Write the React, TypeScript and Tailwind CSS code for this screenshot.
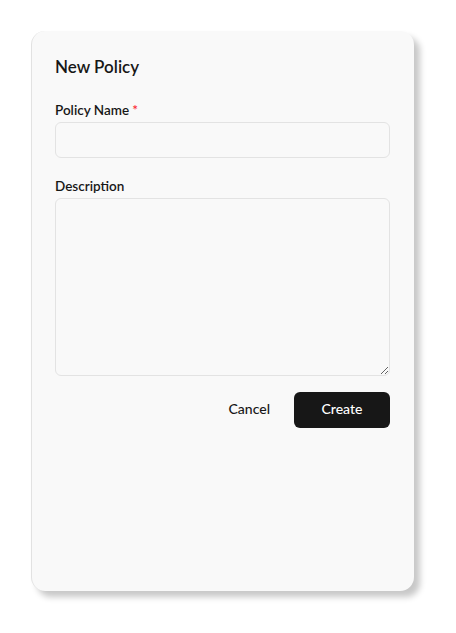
export default function App() {
  return (
    <div className="min-h-screen bg-white pt-[31px] pl-[31px]">
      <div
        className="w-[383px] h-[560px] rounded-[14px] bg-[#f9f9f9] border-l border-[#e2e2e2] shadow-[6px_6px_6px_rgba(0,0,0,0.22)] pl-[23px] pr-6 pt-[24px] text-[#171717]"
        style={{ fontFamily: 'Lato, "Noto Sans", sans-serif' }}
      >
        <h2 className="text-[17px] leading-[24px] font-semibold mb-[22px]">New Policy</h2>

        <label className="block text-[13.5px] leading-[18px] font-semibold mb-[3px]">
          Policy Name<span className="text-red-500 ml-[3px]">*</span>
        </label>
        <input className="block w-full h-[36px] rounded-[6px] border border-[#e3e3e3] bg-[#f9f9f9] px-3 text-sm outline-none" />

        <label className="block mt-[19px] text-[13.5px] leading-[18px] font-semibold mb-[3px]">Description</label>
        <textarea className="block w-full h-[178px] rounded-[6px] border border-[#e3e3e3] bg-[#f9f9f9] px-3 py-2 text-sm outline-none" />

        <div className="flex justify-end items-center gap-[10px] mt-[16px]">
          <button className="h-[36px] px-[14px] pb-[3px] text-[14px] font-medium text-[#171717]">Cancel</button>
          <button className="h-[36px] w-[96px] pb-[3px] rounded-[6px] bg-[#171717] text-white text-[14px] font-medium">Create</button>
        </div>
      </div>
    </div>
  );
}
